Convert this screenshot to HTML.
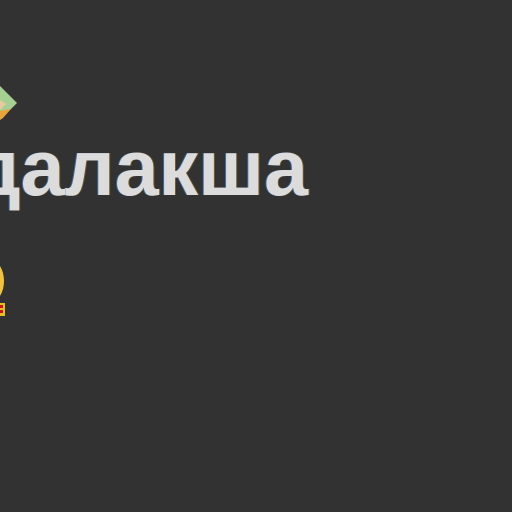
<!DOCTYPE html>
<html><head><meta charset="utf-8"><style>
html,body{margin:0;padding:0;width:512px;height:512px;background:#323232;overflow:hidden;position:relative}
.c{position:absolute;left:0;top:0;width:512px;height:512px;overflow:hidden}
.t{position:absolute;right:204px;top:118px;font:bold 79px "Liberation Sans",sans-serif;color:#dcdcdc;white-space:nowrap;line-height:100px;text-shadow:-1px 0 0 #3a6ea8,1px 0 0 #7a5a20}
</style></head><body>
<div class="c">
<svg style="position:absolute;left:0;top:0" width="512" height="512">
<polygon points="-4,82 17,103 -4,124" fill="#a6cf92"/>
<polygon points="0,100 6,104 0,110" fill="#e9c9a0"/>
<polygon points="0,111 11,109 3,118 0,120" fill="#e8a33a"/>
<ellipse cx="-8" cy="281" rx="12" ry="20" fill="#f2c33a"/>
<rect x="0" y="303" width="5" height="13" fill="#e6c020"/>
<rect x="0" y="305" width="3" height="3" fill="#d01010"/>
<rect x="0" y="310" width="3" height="3" fill="#d01010"/>
</svg>
<div class="t">Кандалакша</div>
</div>
</body></html>
